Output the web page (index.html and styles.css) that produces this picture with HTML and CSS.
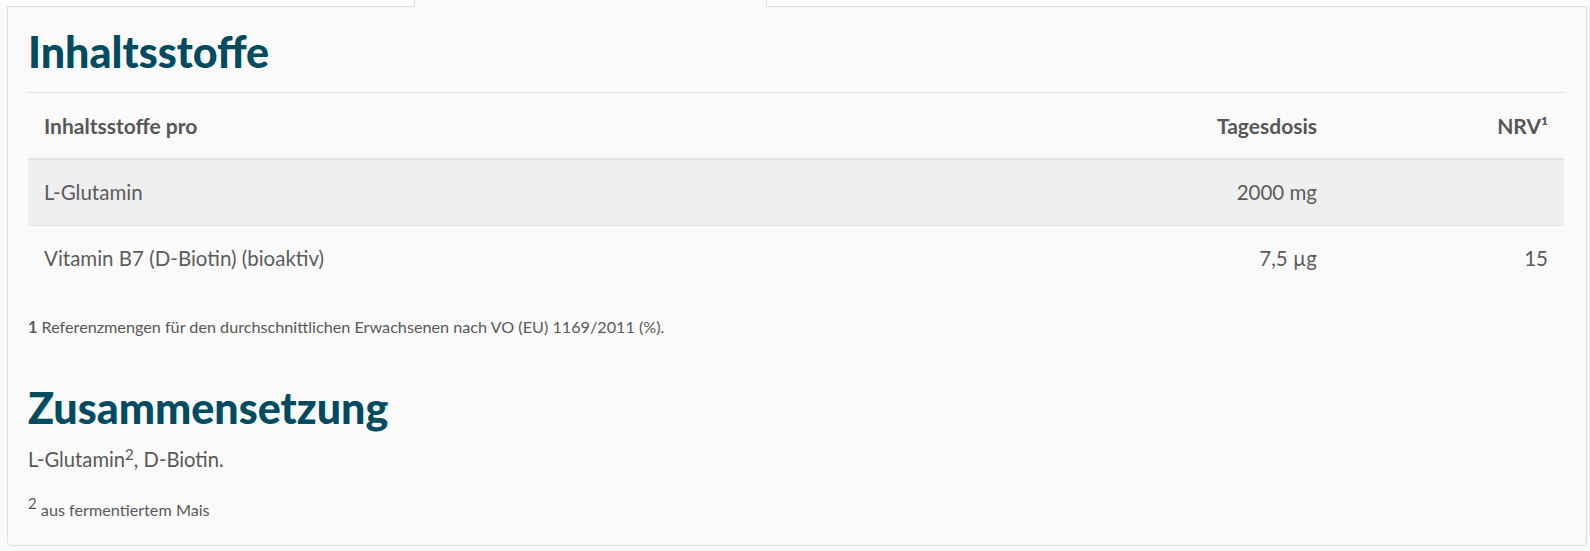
FILE: index.html
```html
<!DOCTYPE html>
<html lang="de">
<head>
    <meta charset="UTF-8">
    <meta name="viewport" content="width=device-width, initial-scale=1.0">
    <title>Inhaltsstoffe</title>
    <link rel="stylesheet" href="styles.css">
</head>
<body>
    <div class="tabs">
        <div class="tab tab-first"></div>
        <div class="tab tab-active"></div>
        <div class="tab tab-last"></div>
    </div>

    <div class="panel">
        <h2 class="section-title">Inhaltsstoffe</h2>

        <table class="ingredients">
            <thead>
                <tr>
                    <th class="col-name">Inhaltsstoffe pro</th>
                    <th class="col-dose">Tagesdosis</th>
                    <th class="col-nrv">NRV¹</th>
                </tr>
            </thead>
            <tbody>
                <tr class="striped">
                    <td>L-Glutamin</td>
                    <td class="num">2000 mg</td>
                    <td class="num"></td>
                </tr>
                <tr>
                    <td>Vitamin B7 (D-Biotin) (bioaktiv)</td>
                    <td class="num">7,5 µg</td>
                    <td class="num">15</td>
                </tr>
            </tbody>
        </table>

        <p class="footnote"><strong>1</strong> Referenzmengen für den durchschnittlichen Erwachsenen nach VO (EU) 1169/2011 (%).</p>

        <h2 class="section-title section-title-second">Zusammensetzung</h2>
        <p class="composition">L-Glutamin<sup>2</sup>, D-Biotin.</p>
        <p class="footnote footnote-origin"><sup>2</sup> aus fermentiertem Mais</p>
    </div>
</body>
</html>
```

FILE: styles.css
```css
body {
    font-family: Lato, 'Noto Sans', sans-serif;
    background-color: #fafafa;
    color: #595959;
    margin: 0;
    padding: 0;
}

/* tab strip, scrolled so only its bottom edge shows */
.tabs {
    display: flex;
    height: 7px;
    margin: 0 3px 0 7px;
}

.tab {
    border-bottom: 1px solid #dedede;
    background-color: #fcfcfc;
}

.tab-first {
    width: 407px;
    border-right: 1px solid #dedede;
}

.tab-active {
    width: 351px;
    border-bottom-color: transparent;
    background-color: #fafafa;
}

.tab-last {
    flex: 1;
    border-left: 1px solid #dedede;
}

.panel {
    border: 1px solid #dedede;
    border-top: none;
    border-radius: 0 0 5px 5px;
    margin: 0 3px 0 7px;
    padding: 19px 22px 24px 20px;
}

.section-title {
    font-size: 43px;
    font-weight: 900;
    color: #004b62;
    margin: 0 0 14px;
    line-height: 52px;
}

.section-title-second {
    margin: 0 0 11px;
}

.ingredients {
    width: 100%;
    border-collapse: collapse;
    border-top: 1px solid #e2e2e2;
    font-size: 20.5px;
}

.ingredients th,
.ingredients td {
    padding: 19px 16px;
    line-height: 27px;
    text-align: left;
}

.ingredients th {
    font-size: 21px;
    font-weight: 700;
    color: #575757;
    border-bottom: 2px solid #e2e2e2;
}

.ingredients td {
    color: #5c5c5c;
}

.ingredients .col-dose,
.ingredients .col-nrv,
.ingredients .num {
    text-align: right;
}

.ingredients .col-nrv {
    width: 199px;
}

.ingredients tr.striped td {
    background-color: #efefef;
    border-bottom: 1px solid #e2e2e2;
}

.footnote {
    font-size: 16.2px;
    line-height: 22px;
    margin: 25px 0 44px;
}

.composition {
    font-size: 20.2px;
    line-height: 28px;
    margin: 0 0 26px;
}

.composition sup,
.footnote-origin sup {
    font-size: 15px;
    line-height: 0;
    vertical-align: 0.5em;
}

.footnote-origin {
    margin: 0;
}
```
